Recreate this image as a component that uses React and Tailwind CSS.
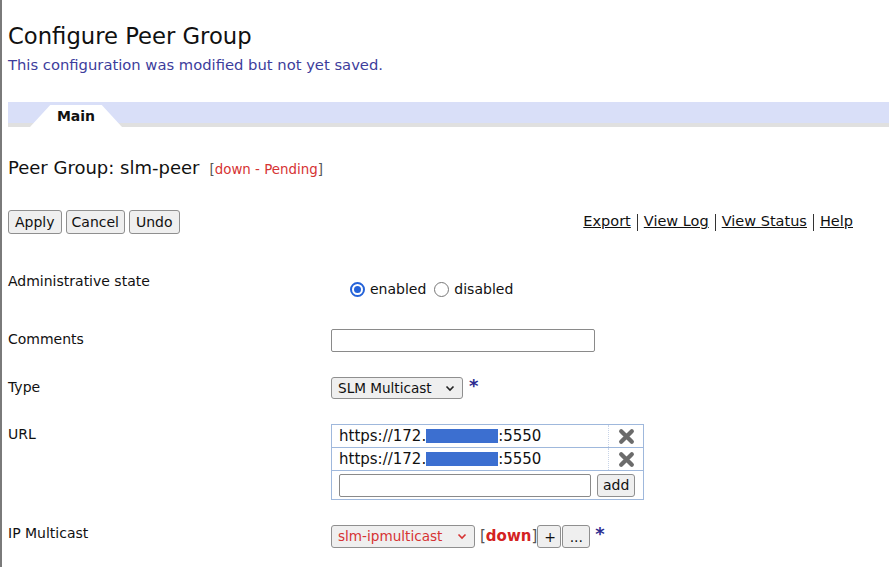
import React from "react";

const font = { fontFamily: '"DejaVu Sans", Verdana, sans-serif' };

function XIcon() {
  return (
    <svg width="17" height="17" viewBox="0 0 16 16">
      <path d="M3 3 L13 13 M13 3 L3 13" stroke="#6b6b6b" strokeWidth="4" strokeLinecap="round" />
    </svg>
  );
}

function Btn({ children, className = "" }) {
  return (
    <button className={"h-[23px] px-[5px] border border-[#8f8f8f] rounded-[3px] bg-[#efefef] text-[14px] leading-none text-[#111] " + className}>
      {children}
    </button>
  );
}

function Chevron({ color = "#222" }) {
  return (
    <svg width="10" height="7" viewBox="0 0 10 7" className="ml-auto">
      <path d="M1.5 1.5 L5 5 L8.5 1.5" fill="none" stroke={color} strokeWidth="1.6" />
    </svg>
  );
}

function UrlRow() {
  return (
    <div className="flex h-[23px] border-b border-[#9fb8dc]">
      <div className="flex items-center pl-[7px] w-[276px] text-[15px] text-[#111]">
        <span>https://172.</span>
        <span className="inline-block w-[72px] h-[14px] bg-[#3c6fd0]"></span>
        <span>:5550</span>
      </div>
      <div className="flex-1 flex items-center justify-center border-l border-dotted border-[#c8d4e8]">
        <XIcon />
      </div>
    </div>
  );
}

function Sep() {
  return <span className="mx-[6px] inline-block w-[1px] h-[17px] bg-[#333]"></span>;
}

export default function App() {
  return (
    <div className="min-h-screen bg-white border-l-2 border-[#7a7a7a] text-[#111]" style={font}>
      <div className="pl-[6px]">
        <h1 className="pt-[21px] text-[22.7px] leading-[30px] text-[#111]">Configure Peer Group</h1>
        <div className="mt-[5px] text-[14.75px] leading-[18px] text-[#3d3d9c]">This configuration was modified but not yet saved.</div>

        <div className="mt-[28px] h-[25px] bg-[#d9dff8] relative flex items-end">
          <div className="absolute left-0 right-0 bottom-0 h-[4px] bg-[#e0e0e0]"></div>
          <div className="relative ml-[22px] w-[92px] h-[22px] bg-white [clip-path:polygon(22%_0,78%_0,100%_100%,0_100%)] flex items-center justify-center">
            <span className="text-[14px] font-bold text-[#111]">Main</span>
          </div>
        </div>

        <div className="mt-[27px] flex items-baseline">
          <span className="text-[18px] text-[#111]">Peer Group: slm-peer</span>
          <span className="ml-[10px] text-[13.4px] text-[#555]">[<span className="text-[#d63333]">down - Pending</span>]</span>
        </div>

        <div className="mt-[29px] flex items-center pr-[36px]">
          <div className="flex gap-[4px]">
            <Btn className="h-[24px] text-[14.5px] px-[6px]">Apply</Btn>
            <Btn className="h-[24px] text-[14.5px] px-[5px]">Cancel</Btn>
            <Btn className="h-[24px] text-[14.5px] px-[6px]">Undo</Btn>
          </div>
          <div className="ml-auto text-[14.5px] text-[#111] flex items-center">
            <a className="underline">Export</a>
            <Sep />
            <a className="underline">View Log</a>
            <Sep />
            <a className="underline">View Status</a>
            <Sep />
            <a className="underline">Help</a>
          </div>
        </div>

        <div className="mt-[37px] grid grid-cols-[323px_1fr] text-[14px]">
          <div className="h-[58px]">Administrative state</div>
          <div className="h-[58px] flex items-start pt-[8px] pl-[19px]">
            <span className="w-[15px] h-[15px] rounded-full border-2 border-[#2563d9] flex items-center justify-center mt-[3px]">
              <span className="w-[7px] h-[7px] rounded-full bg-[#2563d9]"></span>
            </span>
            <span className="ml-[5px]">enabled</span>
            <span className="ml-[8px] w-[15px] h-[15px] rounded-full border border-[#777] mt-[3px]"></span>
            <span className="ml-[5px]">disabled</span>
          </div>

          <div className="h-[48px]">Comments</div>
          <div className="h-[48px]">
            <div className="w-[264px] h-[23px] border border-[#8a8a8a] rounded-[2px] bg-white"></div>
          </div>

          <div className="h-[47px]">Type</div>
          <div className="h-[47px] flex items-start">
            <div className="w-[132px] h-[22px] border border-[#8f8f8f] rounded-[3px] bg-[#efefef] flex items-center pl-[6px] pr-[7px] text-[13.6px]">
              SLM Multicast<Chevron />
            </div>
            <span className="ml-[6px] mt-[2px] text-[#2b2b90] font-bold text-[18px] leading-[14px]">*</span>
          </div>

          <div>URL</div>
          <div>
            <div className="w-[313px] border border-[#9fb8dc] border-b-0">
              <UrlRow />
              <UrlRow />
              <div className="flex items-center h-[29px] border-b border-[#9fb8dc] pl-[7px]">
                <div className="w-[252px] h-[23px] border border-[#8a8a8a] rounded-[2px] bg-white"></div>
                <Btn className="ml-[6px] px-[4px]">add</Btn>
              </div>
            </div>
          </div>

          <div className="pt-[23px]">IP Multicast</div>
          <div className="pt-[25px] flex items-start">
            <div className="w-[144px] h-[23px] border border-[#8f8f8f] rounded-[3px] bg-[#efefef] flex items-center pl-[6px] pr-[7px] text-[13.6px] text-[#d63333]">
              slm-ipmulticast<Chevron color="#d63333" />
            </div>
            <span className="ml-[5px] text-[15px] leading-[23px] text-[#555]">[<span className="text-[#d42222] font-bold">down</span>]</span>
            <Btn className="px-[6px] w-[24px]">+</Btn>
            <Btn className="ml-[1px] px-[4px] w-[28px]">...</Btn>
            <span className="ml-[5px] mt-[2px] text-[#2b2b90] font-bold text-[18px] leading-[14px]">*</span>
          </div>
        </div>
      </div>
    </div>
  );
}
